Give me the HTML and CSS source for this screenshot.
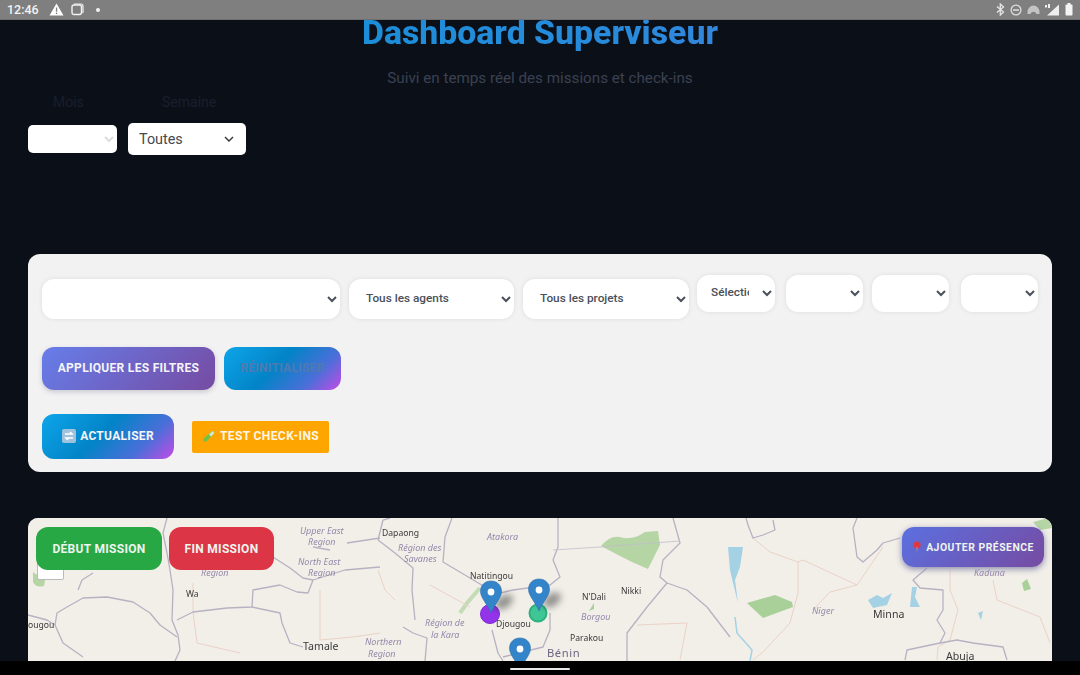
FILE: index.html
```html
<!DOCTYPE html>
<html lang="fr">
<head>
    <meta charset="UTF-8">
    <meta name="viewport" content="width=device-width, initial-scale=1.0">
    <title>Dashboard Superviseur</title>
    <link rel="stylesheet" href="styles.css">
</head>
<body>

    <div class="statusbar">
        <div class="status-left">
            <span class="clock">12:46</span>
            <svg class="st-icon" width="15" height="13" viewBox="0 0 15 13"><path d="M7.5 0.5 L14.5 12.5 H0.5 Z" fill="#fff"/><rect x="6.9" y="4.5" width="1.3" height="4.2" fill="#7f7f7f"/><rect x="6.9" y="9.6" width="1.3" height="1.4" fill="#7f7f7f"/></svg>
            <svg class="st-icon" width="13" height="13" viewBox="0 0 13 13"><rect x="1" y="2" width="9.5" height="9.5" rx="2" fill="none" stroke="#f2f2f2" stroke-width="1.4"/><path d="M3 1 H10 Q12 1 12 3 V10" fill="none" stroke="#f2f2f2" stroke-width="1.2"/></svg>
            <span class="dot"></span>
        </div>
        <div class="status-right">
            <svg width="9" height="13" viewBox="0 0 9 13"><path d="M1 3.5 L7.5 9 L4.3 12 V1 L7.5 4 L1 9.5" fill="none" stroke="#e6e6e6" stroke-width="1.3"/></svg>
            <svg width="12" height="12" viewBox="0 0 12 12"><circle cx="6" cy="6" r="4.9" fill="none" stroke="#dedede" stroke-width="1.3"/><rect x="3" y="5.3" width="6" height="1.5" fill="#dedede"/></svg>
            <svg width="13" height="11" viewBox="0 0 13 11"><path d="M0.5 8 A6 6.5 0 0 1 12.5 8 L12.5 10 H9.5 A3.2 3.5 0 0 0 3.5 10 H0.5 Z" fill="#c4c4c4"/></svg>
            <svg width="15" height="12" viewBox="0 0 15 12"><rect x="0" y="1" width="2" height="2.5" fill="#eee"/><rect x="3" y="0" width="2" height="4" fill="#eee"/><path d="M14 0.5 V11.5 H2 Z" fill="#eee"/></svg>
            <svg width="8" height="13" viewBox="0 0 8 13"><rect x="2.5" y="0" width="3" height="2" fill="#f4f4f4"/><rect x="0.5" y="1.5" width="7" height="11" rx="1" fill="#f4f4f4"/></svg>
        </div>
    </div>

    <div class="page">
        <h1 class="title">Dashboard Superviseur</h1>
        <p class="subtitle">Suivi en temps réel des missions et check-ins</p>

        <div class="period-labels">
            <label class="lbl-mois">Mois</label>
            <label class="lbl-semaine">Semaine</label>
        </div>
        <div class="period-row">
            <select class="sel-mois"><option></option></select>
            <select class="sel-semaine"><option>Toutes</option></select>
        </div>

        <div class="filters">
            <div class="filter-row">
                <select class="f-sel f-big f-date"><option></option></select>
                <select class="f-sel f-big f-agent"><option>Tous les agents</option></select>
                <select class="f-sel f-big f-projet"><option>Tous les projets</option></select>
                <select class="f-sel f-small f-select"><option>Sélectionner</option></select>
                <select class="f-sel f-small f-a"><option></option></select>
                <select class="f-sel f-small f-b"><option></option></select>
                <select class="f-sel f-small f-c"><option></option></select>
            </div>
            <div class="btn-row">
                <button class="btn btn-purple btn-apply">Appliquer les filtres</button>
                <button class="btn btn-blue btn-reset">Réinitialiser</button>
            </div>
            <div class="btn-row btn-row-2">
                <button class="btn btn-blue btn-refresh">
                    <svg width="14" height="14" viewBox="0 0 14 14"><rect width="14" height="14" rx="2" fill="#9fc3dc"/><path d="M3 5 H10 L8 3 M11 9 H4 L6 11" fill="none" stroke="#fff" stroke-width="1.6"/></svg>
                    Actualiser
                </button>
                <button class="btn-test">
                    <svg width="14" height="14" viewBox="0 0 14 14"><path d="M10.5 2 L12.5 4 L4.8 12 Q3 13.4 1.6 12 Q0.6 10.8 2 9 Z" fill="#6fc24a"/><path d="M10.5 2 L12.5 4 L9 7.6 L7 5.6 Z" fill="#cfe8d8"/></svg>
                    Test check-ins
                </button>
            </div>
        </div>

        <div class="map">
            <svg class="map-canvas" viewBox="28 518 1024 143" width="1024" height="143">
                <defs>
                    <filter id="pin-shadow" x="-50%" y="-50%" width="200%" height="200%"><feGaussianBlur stdDeviation="3.5"/></filter>
                    <path id="pin" d="M0 0 C-6.5 0 -10.5 4.5 -10.5 10.5 C-10.5 17 -3 24 0 32 C3 24 10.5 17 10.5 10.5 C10.5 4.5 6.5 0 0 0 Z" fill="#3484c9" stroke="#2a6fa9" stroke-width="0.6"/>
                </defs>
                <rect x="28" y="518" width="1024" height="143" fill="#f2efe9"/>

                <!-- parcs et lacs -->
                <path d="M601 546 Q610 535 620 537 Q632 541 645 532 L658 531 L660 545 L648 569 L632 562 Q612 552 601 546 Z" fill="#b5d5a5"/>
                <path d="M747 603 L775 595 L792 602 L793 607 L763 618 Z" fill="#aad09a"/>
                <path d="M33 572 Q40 578 46 575 L44 586 Q36 588 33 582 Z" fill="#b5d5a5"/>
                <path d="M1033 522 L1048 518 L1052 528 L1040 530 Z" fill="#b5d5a5"/>
                <path d="M1022 583 L1027 579 L1031 589 L1024 591 Z" fill="#aad09a"/>
                <path d="M589 611 L594 603 L594 609 Z" fill="#aad09a"/>
                <path d="M728 547 L743 547 L740 567 L735 580 L738 603 L733 583 L730 570 Z" fill="#a4d1e4"/>
                <path d="M868 600 L877 595 L883 598 L892 593 L887 605 L873 608 Z" fill="#a4d1e4"/>
                <path d="M912 587 L917 587 L915 597 L920 607 L910 607 Z" fill="#a4d1e4"/>
                <path d="M978 613 L983 611 L981 620 Z" fill="#a4d1e4"/>
                <path d="M480 588 L467 603 L460 613" fill="none" stroke="#c4dcb5" stroke-width="4"/>
                <path d="M735 617 L737 633 L752 650 L750 661" fill="none" stroke="#a4d1e4" stroke-width="1.5"/>

                <!-- frontieres d'etat -->
                <g fill="none" stroke="#ebd2c6" stroke-width="1">
                    <path d="M753 538 L770 552 L798 562 L803 560 L857 585 L883 547"/>
                    <path d="M798 562 L798 593 L790 623 L763 652 L753 660"/>
                    <path d="M857 585 L830 592 L813 610"/>
                    <path d="M950 570 L950 590 L958 610 L950 640 L938 647 L937 660"/>
                    <path d="M993 580 L997 600 L1040 617 L1050 643"/>
                    <path d="M193 583 L193 612 L197 643 L240 653"/>
                    <path d="M320 640 L320 590"/>
                    <path d="M320 640 L353 637 L380 633"/>
                    <path d="M637 625 L687 623 L680 660"/>
                    <path d="M378 570 L385 590 L395 600"/>
                    <path d="M430 585 L470 607"/>
                </g>

                <!-- frontieres de pays -->
                <g fill="none" stroke="#b7b1c2" stroke-width="1.3" stroke-linejoin="round">
                    <path d="M167 518 L163 533 L167 553 L170 570 L173 590 L172 620 L178 635 L180 650 L175 661"/>
                    <path d="M55 625 L57 613 L67 607 L83 598 L107 597 L133 602 L150 613 L160 625 L177 637"/>
                    <path d="M28 615 L47 620 L55 625 L63 643 L83 657"/>
                    <path d="M78 590 L82 580 L93 573"/>
                    <path d="M177 620 L193 612 L227 608 L252 607 L253 590 L280 585 L297 592 L308 593 L313 580 L345 570 L380 567"/>
                    <path d="M252 607 L280 613 L282 623 L290 643 L303 647"/>
                    <path d="M258 570 L273 557 L290 568 L303 578 L313 580"/>
                    <path d="M380 538 L347 543"/>
                    <path d="M313 547 L330 550"/>
                    <path d="M452 518 L445 537 L443 562 L470 578 L490 590"/>
                    <path d="M492 630 L498 653 L503 661"/>
                    <path d="M378 540 L395 553 L413 568 L412 590 L415 620"/>
                    <path d="M403 627 L413 633 L427 638 L425 661"/>
                    <path d="M378 540 L383 520 L390 518"/>
                    <path d="M558 518 L558 547 L553 560 L560 577 L550 585 L513 590 L500 593"/>
                    <path d="M550 613 L550 630 L543 647 L503 657"/>
                    <path d="M673 518 L680 543 L663 560 L660 577 L667 583 L647 607 L627 633 L627 661"/>
                    <path d="M667 583 L687 590 L707 607 L730 637"/>
                    <path d="M773 520 L775 530 L763 535 L753 538 L748 525 L746 518"/>
                    <path d="M857 518 L853 528 L857 557 L863 562 L877 550 L883 543 L900 538"/>
                    <path d="M927 568 L913 580 L920 588 L943 590 L943 610 L937 620 L945 633 L940 643 L907 650 L905 660"/>
                    <path d="M940 643 L957 640 L973 643 L1003 647 L1007 660"/>
                </g>
                <path d="M553 550 L600 547 L680 541" fill="none" stroke="#c2bdca" stroke-width="0.8"/>

                <!-- villes -->
                <g class="map-city">
                    <text x="382" y="536">Dapaong</text>
                    <text x="470" y="579">Natitingou</text>
                    <text x="496" y="627">Djougou</text>
                    <text x="582" y="600">N'Dali</text>
                    <text x="621" y="594">Nikki</text>
                    <text x="570" y="641">Parakou</text>
                    <text x="186" y="597">Wa</text>
                    <text x="28" y="628">ougou</text>
                </g>
                <text class="map-city map-big" x="303" y="650">Tamale</text>
                <text class="map-city map-big" x="873" y="618">Minna</text>
                <text class="map-city map-big" x="946" y="660">Abuja</text>
                <text class="map-country" x="547" y="657">Bénin</text>

                <g class="map-region">
                    <text x="300" y="534">Upper East</text>
                    <text x="308" y="545">Region</text>
                    <text x="298" y="565">North East</text>
                    <text x="308" y="576">Region</text>
                    <text x="201" y="576">Region</text>
                    <text x="398" y="551">Région des</text>
                    <text x="404" y="562">Savanes</text>
                    <text x="487" y="540">Atakora</text>
                    <text x="425" y="626">Région de</text>
                    <text x="431" y="638">la Kara</text>
                    <text x="365" y="645">Northern</text>
                    <text x="368" y="657">Region</text>
                    <text x="581" y="620">Borgou</text>
                    <text x="812" y="614">Niger</text>
                    <text x="974" y="576">Kaduna</text>
                </g>

                <!-- marqueurs -->
                <circle cx="490" cy="614" r="9.5" fill="#9333ea" stroke="#7c2bd0" stroke-width="1"/>
                <circle cx="538" cy="613" r="8.5" fill="#3ec795" stroke="#2fb07f" stroke-width="2"/>
                <g filter="url(#pin-shadow)">
                    <ellipse cx="504" cy="602" rx="10" ry="6" fill="#00000066" transform="rotate(-35 504 602)"/>
                    <ellipse cx="552" cy="600" rx="10" ry="6" fill="#00000066" transform="rotate(-35 552 600)"/>
                </g>
                <g transform="translate(491 581)"><use href="#pin"/><circle cy="11" r="3.4" fill="#fff"/></g>
                <g transform="translate(539 579)"><use href="#pin"/><circle cy="11" r="3.4" fill="#fff"/></g>
                <g transform="translate(520 638)"><use href="#pin"/><circle cy="11" r="3.4" fill="#fff"/></g>
            </svg>

            <div class="zoom-ctrl"></div>
            <button class="map-btn map-btn-green">Début mission</button>
            <button class="map-btn map-btn-red">Fin mission</button>
            <button class="map-btn map-btn-add">
                <svg width="10" height="13" viewBox="0 0 10 13"><circle cx="5" cy="4" r="3.6" fill="#e0383e"/><path d="M4.4 6 H5.6 L5 12.5 Z" fill="#a99"/></svg>
                Ajouter présence
            </button>
        </div>
    </div>

    <div class="navbar"><span class="nav-pill"></span></div>

</body>
</html>
```

FILE: styles.css
```css
* {
    box-sizing: border-box;
}
body {
    margin: 0;
    height: 675px;
    overflow: hidden;
    display: flex;
    flex-direction: column;
    background: #0b1018;
    font-family: Roboto, "Liberation Sans", sans-serif;
}

/* barre android */
.statusbar {
    height: 20px;
    flex: none;
    background: #7f7f7f;
    border-bottom: 1px solid #6f706f;
    display: flex;
    justify-content: space-between;
    align-items: center;
    padding: 0 7px 0 7px;
    color: #f2f2f2;
}
.status-left {
    display: flex;
    align-items: center;
}
.clock {
    font-size: 12.5px;
    font-weight: 500;
    margin-right: 10px;
}
.st-icon {
    margin-right: 7px;
}
.dot {
    width: 4px;
    height: 4px;
    border-radius: 50%;
    background: #f2f2f2;
    margin-left: 5px;
}
.status-right {
    display: flex;
    align-items: center;
    gap: 5px;
}
.navbar {
    height: 14px;
    flex: none;
    background: #000;
    display: flex;
    justify-content: center;
    align-items: flex-end;
    padding-bottom: 5px;
}
.nav-pill {
    width: 60px;
    height: 2px;
    border-radius: 1px;
    background: #e8e8e8;
}

/* page */
.page {
    flex: 1;
    overflow: hidden;
    padding: 0 28px;
}
.title {
    margin: -7px 0 0;
    text-align: center;
    font-size: 33.8px;
    line-height: 40px;
    font-weight: 800;
    background: linear-gradient(90deg, #0c92d6 0%, #2a8adc 60%, #5b74da 100%);
    background-clip: text;
    -webkit-background-clip: text;
    color: transparent;
}
.subtitle {
    margin: 15px 0 0;
    text-align: center;
    font-size: 15.2px;
    line-height: 20px;
    color: #3b4152;
}
.period-labels {
    display: flex;
    margin-top: 5px;
    font-size: 14px;
    line-height: 18px;
    color: #1a1e2e;
}
.lbl-mois {
    margin-left: 25px;
    width: 109px;
}
.period-row {
    display: flex;
    align-items: center;
    gap: 11px;
    margin-top: 12px;
}
.sel-mois {
    width: 89px;
    height: 28px;
    background-color: #fff;
    border: none;
    border-radius: 5px;
    color: #ddd;
}
.sel-semaine {
    width: 118px;
    height: 32px;
    padding: 0 11px;
    appearance: none;
    border: none;
    border-radius: 5px;
    font-family: Roboto, sans-serif;
    font-size: 14.4px;
    color: #45484e;
    background: #fff url("data:image/svg+xml,%3Csvg xmlns='http://www.w3.org/2000/svg' width='10' height='6'%3E%3Cpath d='M1 1l4 4 4-4' fill='none' stroke='%23333' stroke-width='1.4'/%3E%3C/svg%3E") no-repeat right 12px center;
}

/* filtres */
.filters {
    margin-top: 99px;
    height: 218px;
    background: #f2f2f3;
    border-radius: 12px;
    padding: 21px 14px 0;
}
.filter-row {
    display: flex;
    align-items: flex-start;
}
.f-sel {
    background: #fff;
    border: none;
    border-radius: 12px;
    box-shadow: 0 0 4px #dcdcde;
    font-family: Roboto, sans-serif;
    font-size: 11.8px;
    font-weight: 500;
    color: #4a505a;
    padding: 0 0 2px 13px;
}
.f-big {
    height: 40px;
    margin-top: 4px;
}
.f-small {
    height: 37px;
}
.f-date { width: 298px; }
.f-agent { width: 165px; margin-left: 9px; }
.f-projet { width: 166px; margin-left: 9px; }
.f-select { width: 78px; margin-left: 8px; padding: 0 10px 3px; }
.f-a { width: 77px; margin-left: 11px; }
.f-b { width: 77px; margin-left: 9px; }
.f-c { width: 77px; margin-left: 12px; }

.btn-row {
    display: flex;
    gap: 9px;
    margin-top: 28px;
}
.btn-row-2 {
    margin-top: 24px;
    align-items: center;
    gap: 18px;
}
.btn {
    border: none;
    border-radius: 12px;
    font-family: Roboto, sans-serif;
    font-size: 12px;
    font-weight: 700;
    letter-spacing: .3px;
    text-transform: uppercase;
    color: #f4f4f8;
    padding: 0 0 2px;
}
.btn-purple {
    background: linear-gradient(135deg, #667eea 0%, #764ba2 100%);
    box-shadow: 0 2px 5px #c8c8d0;
}
.btn-blue {
    background: linear-gradient(135deg, #0ea5e9 0%, #0284c7 45%, #4a6fd8 75%, #c44be6 100%);
}
.btn-apply {
    width: 173px;
    height: 43px;
}
.btn-reset {
    width: 117px;
    height: 43px;
    color: #4f7ab0;
}
.btn-refresh {
    width: 132px;
    height: 45px;
    display: flex;
    align-items: center;
    justify-content: center;
    gap: 4px;
}
.btn-test {
    width: 137px;
    height: 32px;
    border: none;
    border-radius: 2px;
    background: #ffa500;
    color: #fff7e6;
    font-family: Roboto, sans-serif;
    font-size: 12px;
    font-weight: 700;
    letter-spacing: .4px;
    text-transform: uppercase;
    display: flex;
    align-items: center;
    justify-content: center;
    gap: 4px;
    padding: 0 0 2px;
}

/* carte */
.map {
    position: relative;
    margin-top: 46px;
    height: 143px;
    overflow: hidden;
    border-radius: 10px 10px 0 0;
    background: #f2efe9;
}
.map-canvas {
    display: block;
    filter: blur(.3px);
}
.map-city {
    font-family: "Noto Sans", sans-serif;
    font-size: 8.6px;
    fill: #3a3a3a;
}
.map-big {
    font-size: 10.6px;
}
.map-country {
    font-family: "Noto Sans", sans-serif;
    font-size: 11.2px;
    letter-spacing: .6px;
    fill: #6b6480;
}
.map-region {
    font-family: "Noto Sans", sans-serif;
    font-size: 9px;
    font-style: italic;
    fill: #9587aa;
}
.zoom-ctrl {
    position: absolute;
    left: 9px;
    top: 40px;
    width: 27px;
    height: 22px;
    background: #fff;
    border: 1px solid #bbb;
    border-radius: 2px;
}
.map-btn {
    position: absolute;
    top: 9px;
    height: 43px;
    border: none;
    border-radius: 12px;
    font-family: Roboto, sans-serif;
    font-size: 12px;
    font-weight: 700;
    letter-spacing: .3px;
    text-transform: uppercase;
    color: #eef4ee;
    padding: 0;
}
.map-btn-green {
    left: 8px;
    width: 126px;
    background: #28a745;
}
.map-btn-red {
    left: 141px;
    width: 105px;
    background: #dc3545;
}
.map-btn-add {
    right: 8px;
    width: 142px;
    height: 40px;
    font-size: 10.4px;
    letter-spacing: .5px;
    background: linear-gradient(135deg, #5b70e0 0%, #764ba2 100%);
    box-shadow: 0 2px 6px #8888aa;
    display: flex;
    align-items: center;
    justify-content: center;
    gap: 4px;
}
```
